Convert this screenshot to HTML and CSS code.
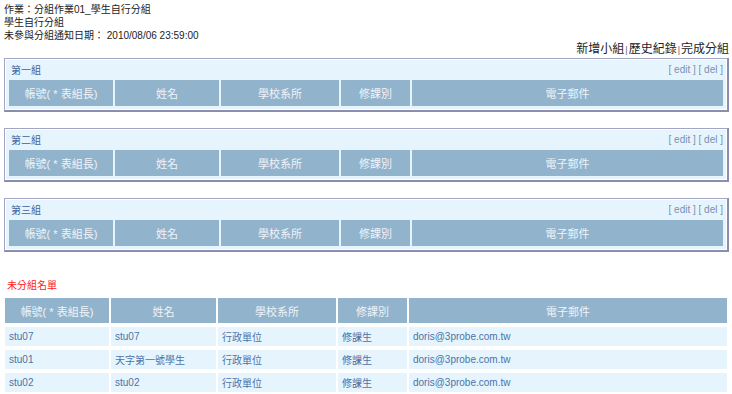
FILE: index.html
```html
<!DOCTYPE html>
<html lang="zh-Hant">
<head>
<meta charset="utf-8">
<title>學生自行分組</title>
<link rel="stylesheet" href="styles.css">
</head>
<body>
<div class="info">
  <div>作業：分組作業01_學生自行分組</div>
  <div>學生自行分組</div>
  <div>未參與分組通知日期： 2010/08/06 23:59:00</div>
</div>
<div class="actions"><a>新增小組</a><span class="sep">|</span><a>歷史紀錄</a><span class="sep">|</span><a>完成分組</a></div>

<div class="group">
  <div class="group-title"><span>第一組</span><span class="ops">[ edit ] [ del ]</span></div>
  <table class="grid">
    <tr><th class="c1">帳號( * 表組長)</th><th class="c2">姓名</th><th class="c3">學校系所</th><th class="c4">修課別</th><th>電子郵件</th></tr>
  </table>
</div>

<div class="group">
  <div class="group-title"><span>第二組</span><span class="ops">[ edit ] [ del ]</span></div>
  <table class="grid">
    <tr><th class="c1">帳號( * 表組長)</th><th class="c2">姓名</th><th class="c3">學校系所</th><th class="c4">修課別</th><th>電子郵件</th></tr>
  </table>
</div>

<div class="group">
  <div class="group-title"><span>第三組</span><span class="ops">[ edit ] [ del ]</span></div>
  <table class="grid">
    <tr><th class="c1">帳號( * 表組長)</th><th class="c2">姓名</th><th class="c3">學校系所</th><th class="c4">修課別</th><th>電子郵件</th></tr>
  </table>
</div>

<div class="unassigned-title">未分組名單</div>
<table class="list">
  <tr><th class="u1">帳號( * 表組長)</th><th class="u2">姓名</th><th class="u3">學校系所</th><th class="u4">修課別</th><th>電子郵件</th></tr>
  <tr><td>stu07</td><td>stu07</td><td>行政單位</td><td>修課生</td><td>doris@3probe.com.tw</td></tr>
  <tr><td>stu01</td><td>天字第一號學生</td><td>行政單位</td><td>修課生</td><td>doris@3probe.com.tw</td></tr>
  <tr><td>stu02</td><td>stu02</td><td>行政單位</td><td>修課生</td><td>doris@3probe.com.tw</td></tr>
</table>
</body>
</html>
```
FILE: styles.css
```css
html, body {
  margin: 0;
  padding: 0;
  background: #ffffff;
}
body {
  padding: 3px 3px 0 4px;
  font-family: "Liberation Sans", "Noto Sans CJK TC", sans-serif;
  font-size: 10px;
  color: #222222;
}
.info {
  line-height: 13px;
}
.actions {
  text-align: right;
  font-size: 12px;
  line-height: 14px;
  color: #222222;
}
.actions .sep {
  font-size: 9px;
  color: #666666;
  padding: 0 1px;
}
.group {
  margin-top: 1px;
  margin-bottom: 16px;
  border-top: 1px solid #a4a4c4;
  border-left: 1px solid #a4a4c4;
  border-right: 2px solid #8c8cae;
  border-bottom: 2px solid #8c8cae;
  background: #e6f5fd;
  box-shadow: inset 1px 1px 0 #ffffff, inset -1px -1px 0 #ffffff;
  padding: 1px 2px 2px 2px;
}
.group-title {
  display: flex;
  justify-content: space-between;
  align-items: center;
  height: 18px;
  padding: 0 2px 0 4px;
  color: #3a62a0;
}
.group-title .ops {
  color: #7890b0;
}
.grid, .list {
  width: 100%;
  border-collapse: separate;
  table-layout: fixed;
}
.grid {
  border-spacing: 2px;
}
.grid th, .list th {
  background: #92b3cc;
  color: #eef4f9;
  font-weight: normal;
  font-size: 11px;
  text-align: center;
}
.grid th {
  height: 26px;
  padding: 0;
}
.c1 { width: 104px; }
.c2 { width: 104px; }
.c3 { width: 118px; }
.c4 { width: 69px; }
.unassigned-title {
  margin-top: 26px;
  color: #ff2020;
  line-height: 16px;
  padding-left: 3px;
}
.list {
  border-spacing: 2px 4px;
  margin-left: -1px;
  width: calc(100% + 1px);
}
.list th {
  height: 25px;
  padding: 0;
}
.u1 { width: 104px; }
.u2 { width: 105px; }
.u3 { width: 118px; }
.u4 { width: 69px; }
.list td {
  background: #e6f5fd;
  color: #4c72a8;
  height: 19px;
  padding: 0 4px;
  font-size: 10px;
  white-space: nowrap;
}
```
